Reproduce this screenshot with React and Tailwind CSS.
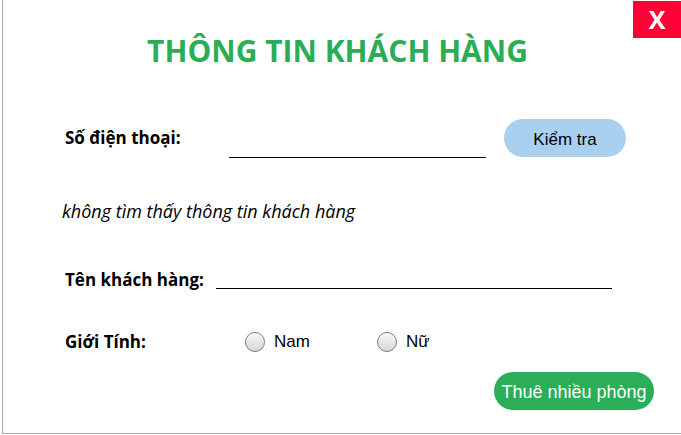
export default function App() {
  return (
    <div className="w-[681px] h-[435px] bg-white pl-[2px] font-['Open_Sans',sans-serif]">
      <div className="relative h-[434px] border-l border-b border-[#a9a9a9] bg-white">
        {/* close */}
        <button className="absolute top-[1px] right-0 w-[48px] h-[37px] bg-[#ff0036] text-white text-[25px] font-bold leading-none flex items-center justify-center">
          X
        </button>

        {/* title */}
        <h1 className="pt-[31px] text-center text-[30px] leading-[40px] font-bold text-[#2bad55] pr-[9px]">
          THÔNG TIN KHÁCH HÀNG
        </h1>

        {/* phone row */}
        <div className="mt-[48px] flex items-center pl-[62px] h-[38px]">
          <span className="w-[164px] text-[17px] font-bold text-black">Số điện thoại:</span>
          <div className="w-[257px] h-[18px] self-end mb-[-1px] border-b border-black" />
          <button className="ml-[18px] w-[122px] h-[38px] pt-[3px] rounded-full bg-[#a9d0ef] text-[17px] text-black font-['Liberation_Sans',sans-serif]">
            Kiểm tra
          </button>
        </div>

        {/* status */}
        <p className="mt-[42px] pl-[59px] text-[18px] italic text-black leading-[24px]">
          không tìm thấy thông tin khách hàng
        </p>

        {/* name row */}
        <div className="mt-[45px] flex items-end pl-[62px] h-[24px]">
          <span className="w-[151px] text-[17px] font-bold text-black leading-[24px]">Tên khách hàng:</span>
          <div className="w-[396px] mb-[3px] border-b border-black" />
        </div>

        {/* gender row */}
        <div className="mt-[38px] flex items-center pl-[62px] h-[24px] text-[17px]">
          <span className="w-[180px] font-bold text-black">Giới Tính:</span>
          <label className="flex items-center w-[132px] font-['Liberation_Sans',sans-serif] text-black">
            <span className="w-[20px] h-[20px] rounded-full border border-[#7a7a7a] bg-gradient-to-b from-[#f7f7f7] to-[#d6d6d6] shadow-[inset_0_1px_1px_#ffffff]" />
            <span className="ml-[9px]">Nam</span>
          </label>
          <label className="flex items-center font-['Liberation_Sans',sans-serif] text-black">
            <span className="w-[20px] h-[20px] rounded-full border border-[#7a7a7a] bg-gradient-to-b from-[#f7f7f7] to-[#d6d6d6] shadow-[inset_0_1px_1px_#ffffff]" />
            <span className="ml-[9px]">Nữ</span>
          </label>
        </div>

        {/* footer */}
        <div className="mt-[18px] flex justify-end pr-[27px]">
          <button className="w-[160px] h-[38px] pt-[2px] rounded-full bg-[#2aae57] text-white text-[18px] font-['Liberation_Sans',sans-serif]">
            Thuê nhiều phòng
          </button>
        </div>
      </div>
    </div>
  )
}
